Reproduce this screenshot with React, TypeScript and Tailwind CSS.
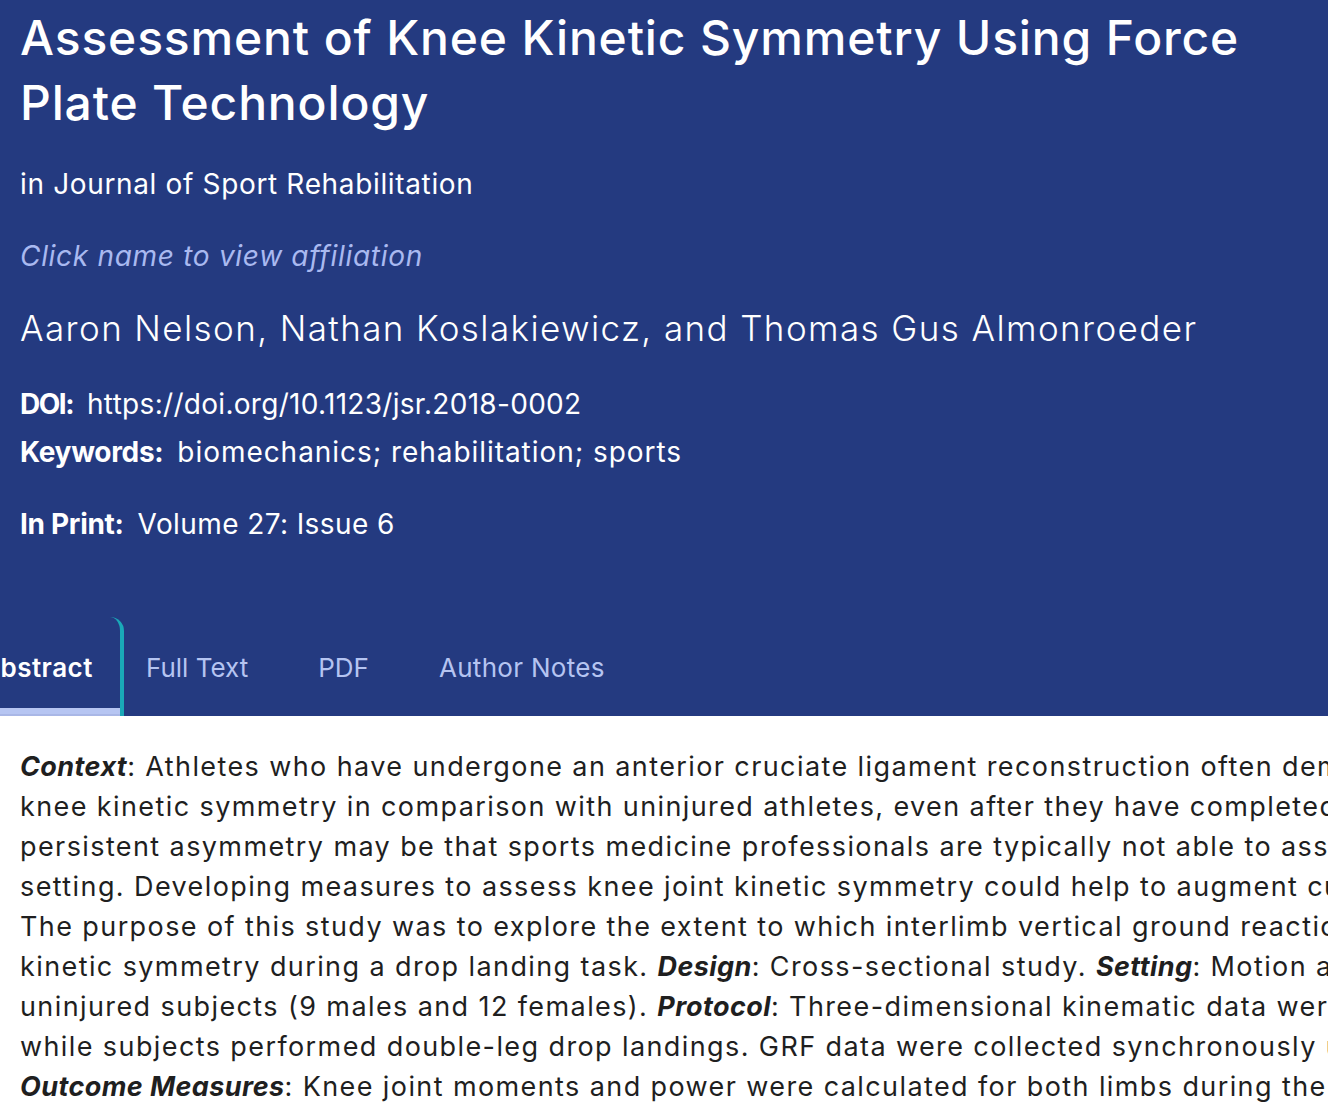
import React from "react";

const B = ({ children }: { children: React.ReactNode }) => (
  <span className="font-bold italic tracking-[0.4px]">{children}</span>
);

export default function App() {
  const font = { fontFamily: "Inter, 'Noto Sans', sans-serif" };
  return (
    <div className="w-[1328px] h-[1106px] overflow-hidden bg-white" style={font}>
      <header className="bg-[#243a80] text-white pt-[5px]">
        <div className="pl-5 pr-[40px]">
          <h1 className="text-[48px] leading-[65px] font-medium tracking-[0.85px]">
            Assessment of Knee Kinetic Symmetry Using Force Plate Technology
          </h1>
          <p className="mt-[29px] text-[28px] leading-[40px] tracking-[0.65px]">in Journal of Sport Rehabilitation</p>
          <p className="mt-[32px] text-[28px] leading-[40px] italic text-[#a9b9f0] tracking-[0.7px]">
            Click name to view affiliation
          </p>
          <p className="mt-[28px] text-[35px] leading-[48px] font-light tracking-[1.4px]">
            Aaron Nelson, Nathan Koslakiewicz, and Thomas Gus Almonroeder
          </p>
          <p className="mt-[32px] text-[28px] leading-[40px]">
            <span className="font-bold tracking-[-1.5px]">DOI:</span>
            <span className="ml-[14px] tracking-[0.3px]">https://doi.org/10.1123/jsr.2018-0002</span>
          </p>
          <p className="mt-[8px] text-[28px] leading-[40px]">
            <span className="font-bold tracking-[-0.3px]">Keywords:</span>
            <span className="ml-[14px] tracking-[0.95px]">biomechanics; rehabilitation; sports</span>
          </p>
          <p className="mt-[32px] text-[28px] leading-[40px]">
            <span className="font-bold tracking-[-0.3px]">In Print:</span>
            <span className="ml-[14px] tracking-[0.4px]">Volume 27: Issue 6</span>
          </p>
        </div>
        <nav className="mt-[73px] flex -ml-[41px] text-[26px]">
          <div className="flex flex-col border-r-4 border-[#1aa9b8] rounded-tr-[14px]">
            <span className="pl-[22px] pr-[27px] pt-[31px] pb-[20px] leading-[40px] font-semibold tracking-[0.5px]">
              Abstract
            </span>
            <span className="h-[8px] bg-[#b6c5f2] border-b-2 border-[#a9b7e6]" />
          </div>
          <span className="pl-[22px] pr-[48px] pt-[31px] leading-[40px] text-[#b5c4f1]">Full Text</span>
          <span className="pl-[22px] pr-[48px] pt-[31px] leading-[40px] text-[#b5c4f1]">PDF</span>
          <span className="pl-[22px] pr-[51px] pt-[31px] leading-[40px] text-[#b5c4f1] tracking-[0.3px]">Author Notes</span>
        </nav>
      </header>
      <section className="pl-5 pt-[31px] text-[27px] leading-[40px] text-[#1f1f1f] whitespace-nowrap tracking-[1.4px]">
        <div>
          <B>Context</B>: Athletes who have undergone an anterior cruciate ligament reconstruction often demonstrate deficits in
        </div>
        <div>
          knee kinetic symmetry in comparison with uninjured athletes, even after they have completed rehabilitation. One of the reasons for this
        </div>
        <div>
          persistent asymmetry may be that sports medicine professionals are typically not able to assess knee joint kinetics in a clinical
        </div>
        <div>
          setting. Developing measures to assess knee joint kinetic symmetry could help to augment current rehabilitation practices. <B>Objective</B>:
        </div>
        <div>
          The purpose of this study was to explore the extent to which interlimb vertical ground reaction force (GRF) symmetry could be used to estimate knee
        </div>
        <div>
          kinetic symmetry during a drop landing task. <B>Design</B>: Cross-sectional study. <B>Setting</B>: Motion analysis laboratory. <B>Participants</B>: A total of 21
        </div>
        <div>
          uninjured subjects (9 males and 12 females). <B>Protocol</B>: Three-dimensional kinematic data were collected via an 8-camera motion capture system
        </div>
        <div>
          while subjects performed double-leg drop landings. GRF data were collected synchronously using 2 force plates.
        </div>
        <div>
          <B>Outcome Measures</B>: Knee joint moments and power were calculated for both limbs during the landing phase of the task.
        </div>
      </section>
    </div>
  );
}
